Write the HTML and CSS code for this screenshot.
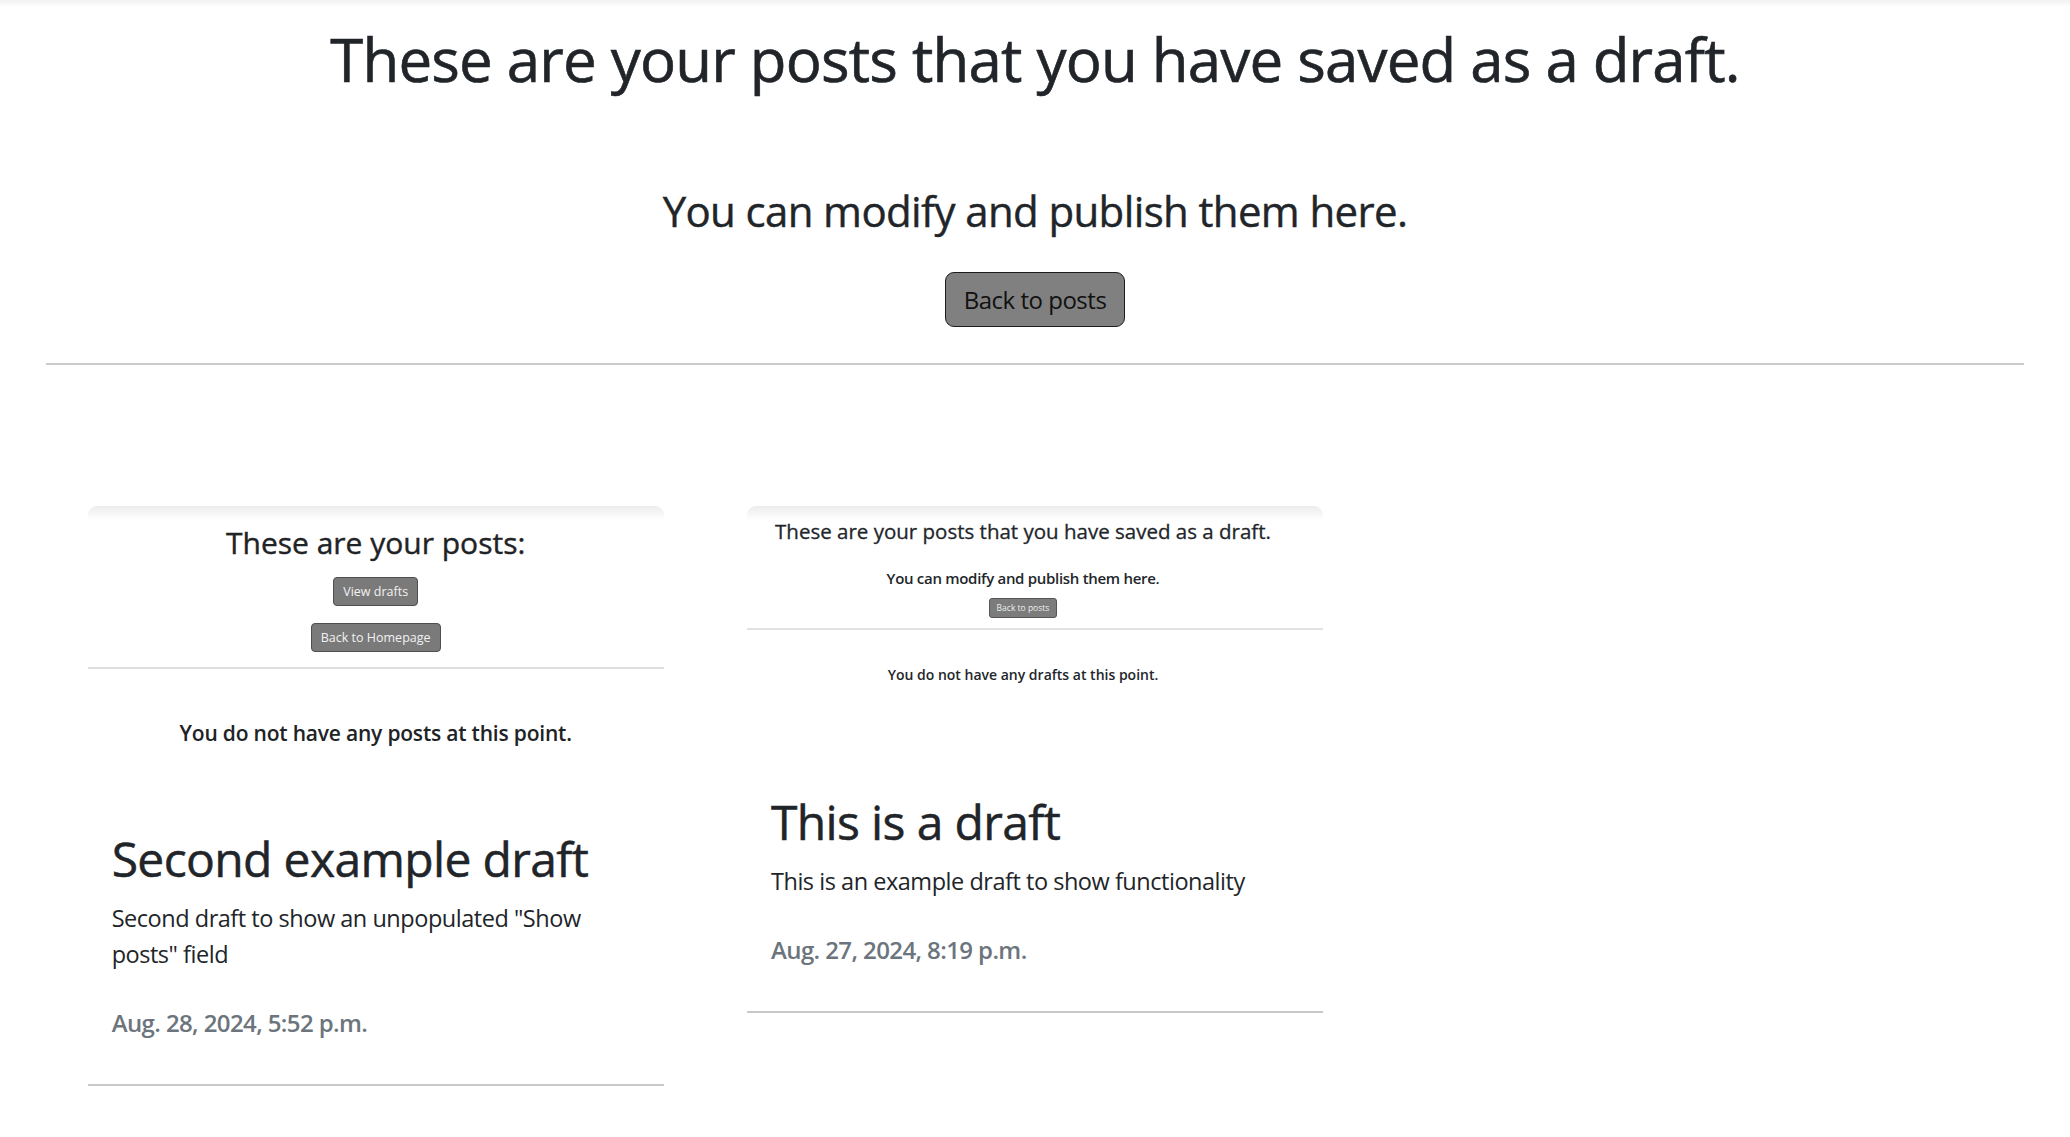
FILE: index.html
```html
<!DOCTYPE html>
<html lang="en">
<head>
<meta charset="utf-8">
<title>Drafts</title>
<link rel="stylesheet" href="styles.css">
</head>
<body>
<main class="page">
  <header class="intro">
    <h1 class="intro-title">These are your posts that you have saved as a draft.</h1>
    <h3 class="intro-sub">You can modify and publish them here.</h3>
    <button class="btn-back" type="button">Back to posts</button>
  </header>
  <hr class="rule">
  <section class="grid">
    <article class="card">
      <div class="shot shot-posts">
        <div class="sp-title">These are your posts:</div>
        <span class="sp-btn sp-btn-first">View drafts</span>
        <span class="sp-btn sp-btn-second">Back to Homepage</span>
        <div class="sp-rule"></div>
        <div class="sp-empty">You do not have any posts at this point.</div>
      </div>
      <div class="card-body">
        <h2 class="card-title">Second example draft</h2>
        <p class="card-text">Second draft to show an unpopulated "Show posts" field</p>
        <h6 class="card-date">Aug. 28, 2024, 5:52 p.m.</h6>
      </div>
    </article>
    <article class="card">
      <div class="shot shot-drafts">
        <div class="sd-title">These are your posts that you have saved as a draft.</div>
        <div class="sd-sub">You can modify and publish them here.</div>
        <span class="sd-btn">Back to posts</span>
        <div class="sd-rule"></div>
        <div class="sd-empty">You do not have any drafts at this point.</div>
      </div>
      <div class="card-body">
        <h2 class="card-title">This is a draft</h2>
        <p class="card-text">This is an example draft to show functionality</p>
        <h6 class="card-date">Aug. 27, 2024, 8:19 p.m.</h6>
      </div>
    </article>
  </section>
</main>
</body>
</html>
```
FILE: styles.css
```css
* { box-sizing: border-box; }

html, body { margin: 0; padding: 0; }

body {
  font-family: "Open Sans", "Noto Sans", sans-serif;
  color: #212529;
  background: #ffffff linear-gradient(#f1f1f1, #ffffff 7px) no-repeat;
  min-height: 1137px;
  letter-spacing: -0.24px;
}

.page {
  padding: 0 46px;
}

.intro {
  display: flex;
  flex-direction: column;
  align-items: center;
  padding-top: 23px;
}

.intro-title {
  margin: 0;
  font-size: 60px;
  line-height: 72px;
  font-weight: 500;
  letter-spacing: -0.8px;
  -webkit-text-stroke: 0.6px #212529;
}

.intro-sub {
  margin: 91px 0 0;
  font-size: 42px;
  line-height: 50.4px;
  font-weight: 500;
  letter-spacing: -0.63px;
  -webkit-text-stroke: 0.4px #212529;
}

.btn-back {
  margin-top: 36px;
  font-family: inherit;
  letter-spacing: -0.48px;
  font-size: 24px;
  line-height: 36px;
  padding: 8.5px 18px;
  color: #111111;
  background: #808080;
  border: 1px solid #1c1c1c;
  border-radius: 9px;
}

.rule {
  margin: 36px 0 0;
  border: 0;
  height: 2px;
  background: #cbcbcb;
}

.grid {
  display: grid;
  grid-template-columns: repeat(3, 1fr);
  margin-top: 141px;
  align-items: start;
}

.card {
  justify-self: center;
  width: 576px;
  border-bottom: 2px solid #c9c9c9;
}

.shot {
  display: flex;
  flex-direction: column;
  align-items: center;
  background: #ffffff linear-gradient(#ececec, #ffffff 14px) no-repeat;
  border-radius: 9px 9px 0 0;
  letter-spacing: 0;
}

/* posts screenshot */
.shot-posts { height: 300px; }

.sp-title {
  margin-top: 18px;
  font-size: 30px;
  line-height: 37px;
  font-weight: 500;
  color: #1f2326;
  -webkit-text-stroke: 0.4px #1f2326;
}

.sp-btn {
  display: block;
  font-size: 12.5px;
  line-height: 19px;
  padding: 4px 9px;
  color: #f2f2f2;
  background: #7a7a7a;
  border: 1px solid #4f4f4f;
  border-radius: 4px;
}

.sp-btn-first { margin-top: 16px; }
.sp-btn-second { margin-top: 17px; }

.sp-rule {
  align-self: stretch;
  margin-top: 15px;
  height: 2px;
  background: #dedede;
}

.sp-empty {
  margin-top: 49px;
  font-size: 21px;
  line-height: 30px;
  font-weight: 600;
  letter-spacing: -0.2px;
  color: #202326;
}

/* drafts screenshot */
.shot-drafts {
  height: 263px;
  padding-right: 24px;
}

.sd-title {
  margin-top: 12px;
  font-size: 20.5px;
  line-height: 26px;
  font-weight: 500;
  color: #22262a;
  -webkit-text-stroke: 0.3px #22262a;
}

.sd-sub {
  margin-top: 24px;
  font-size: 15px;
  line-height: 20px;
  font-weight: 600;
  letter-spacing: -0.3px;
  color: #22262a;
}

.sd-btn {
  display: block;
  margin-top: 10px;
  font-size: 8.5px;
  line-height: 12px;
  padding: 3px 7px;
  color: #eeeeee;
  background: #7c7c7c;
  border: 1px solid #555555;
  border-radius: 3px;
}

.sd-rule {
  align-self: stretch;
  margin: 10px -24px 0 0;
  height: 2px;
  background: #e2e2e2;
}

.sd-empty {
  margin-top: 35px;
  font-size: 14px;
  line-height: 20px;
  font-weight: 600;
  color: #22262a;
}

/* card body */
.card-body {
  padding: 24px 24px 43px;
}

.card-title {
  margin: 0 0 12px;
  font-size: 48px;
  line-height: 57.6px;
  font-weight: 500;
  letter-spacing: -0.64px;
  -webkit-text-stroke: 0.5px #212529;
}

.card-text {
  margin: 0 0 24px;
  font-size: 23.5px;
  line-height: 36px;
  letter-spacing: -0.47px;
}

.card-date {
  margin: 33px 0 0;
  font-size: 24px;
  line-height: 36px;
  font-weight: 600;
  letter-spacing: -0.6px;
  color: #6c757d;
}
```
